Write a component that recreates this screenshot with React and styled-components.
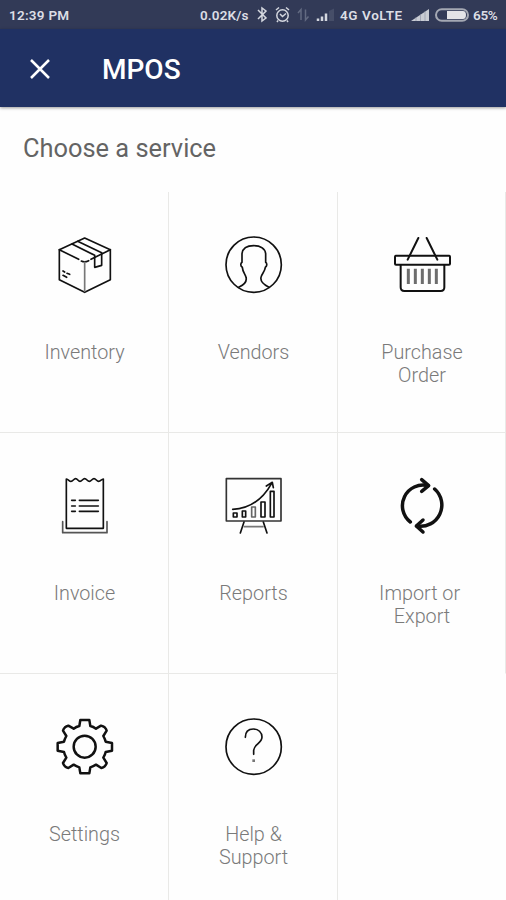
import React from "react";
import styled, { createGlobalStyle } from "styled-components";

const GlobalStyle = createGlobalStyle`
  * { box-sizing: border-box; }
  body { margin: 0; background: #fefefe; font-family: Roboto, "Liberation Sans", sans-serif; }
`;

const Screen = styled.main`
  width: 506px;
  height: 900px;
  overflow: hidden;
  display: flex;
  flex-direction: column;
  background: #fefefe;
`;

const StatusBar = styled.div`
  height: 29px;
  flex: none;
  display: flex;
  justify-content: space-between;
  align-items: center;
  padding: 1px 8px 0 9px;
  background: #323a57;
  color: #dcdee5;
  font-size: 13.5px;
  font-weight: 600;
  line-height: 16px;
`;

const StatusGroup = styled.div`
  display: flex;
  align-items: center;
`;

const StatusText = styled.span`
  width: ${(p) => (p.$width ? `${p.$width}px` : "auto")};
  margin-right: ${(p) => p.$gap || 0}px;
  letter-spacing: ${(p) => p.$spacing || 0}px;
  white-space: nowrap;
`;

const StatusIcon = styled.svg`
  display: block;
  flex: none;
  height: 20px;
  fill: none;
  stroke: #d4d7df;
  stroke-width: 1.5;
`;

const AppBar = styled.header`
  height: 78px;
  flex: none;
  display: flex;
  align-items: center;
  padding: 3px 0 0 29px;
  background: #203163;
  box-shadow: 0 1px 3px rgba(0, 0, 0, 0.4);
  color: #fff;
`;

const CloseButton = styled.button`
  width: 22px;
  height: 22px;
  padding: 0;
  border: 0;
  background: none;
  color: inherit;
  svg { display: block; }
`;

const Title = styled.h1`
  margin: 0 0 0 51px;
  font-size: 28px;
  font-weight: 500;
  line-height: 32px;
`;

const Heading = styled.h2`
  height: 85px;
  flex: none;
  margin: 0;
  padding: 25px 0 0 23px;
  color: #646464;
  font-size: 25.4px;
  font-weight: 400;
  line-height: 32px;
`;

const Grid = styled.section`
  display: grid;
  grid-template-columns: 169px 169px 168px;
  grid-auto-rows: 241px;
`;

const Tile = styled.div`
  display: flex;
  flex-direction: column;
  align-items: center;
  padding-top: 33px;
  border-right: 1px solid #e9e9e7;
  border-bottom: 1px solid ${(p) => (p.$open ? "transparent" : "#e9e9e7")};
`;

const TileIcon = styled.svg`
  display: block;
  width: 90px;
  height: 80px;
  fill: none;
  stroke: #111;
  stroke-width: ${(p) => p.$weight || 5};
  stroke-linecap: round;
  stroke-linejoin: round;
`;

const Label = styled.span`
  margin-top: 36px;
  padding-left: 1px;
  color: #7a7a7a;
  font-size: 19.8px;
  font-weight: 300;
  line-height: 23px;
  text-align: center;
  white-space: pre;
`;

const BoxIcon = () => (
  <TileIcon viewBox="-3 0 270 240">
    <path d="M134 39 L211 74 V164 L134 202 L58 164 V74 Z" />
    <path d="M58 74 L116 103 M153 103 L211 74 M96 57 L164 91 M113 49 L185 83" />
    <path d="M124 108 Q134 113 146 107" />
    <path d="M134 112 V199" stroke="#777" />
    <path d="M164 93 V127 L185 121 V86" />
    <path d="M69 138 L74 141 M81 145 L89 148 M69 151 L80 157" />
  </TileIcon>
);

const PersonIcon = () => (
  <TileIcon viewBox="-6 0 270 240">
    <circle cx="131" cy="119" r="83" />
    <path d="M86 187 C101 180 112 171 108 157 C106 147 98 141 97 127 C91 124 91 115 96 112 V86 C98 70 111 62 131 62 C151 62 165 71 167 86 V112 C172 115 171 124 166 127 C164 141 156 145 153 157 C150 171 161 179 177 187" />
  </TileIcon>
);

const BasketIcon = () => (
  <TileIcon viewBox="-3 0 270 240" $weight={6}>
    <rect x="51" y="92" width="165" height="27" rx="3" />
    <path d="M68 120 V187 Q68 198 79 198 H188 Q199 198 199 187 V120" />
    <path d="M121 39 L89 104 M146 39 L178 104" />
    <path
      d="M91 131 V177 M112 131 V177 M133 131 V177 M154 131 V177 M175 131 V177"
      stroke="#6d6d6d"
      strokeWidth="9"
      strokeLinecap="butt"
    />
  </TileIcon>
);

const InvoiceIcon = () => (
  <TileIcon viewBox="-3 3 270 240">
    <path d="M79 190 V42 C86 43 87 49 93 49 C99 49 101 41 107 41 C113 41 114 49 120 49 C126 49 128 41 134 41 C140 41 142 49 148 49 C154 49 156 41 162 41 C168 41 170 49 176 49 C182 49 184 43 190 42 V190 Z" />
    <path d="M68 170 V203 H201 V170" stroke="#555" />
    <path d="M95 106 H106 M118 106 H175 M95 123 H106 M118 123 H175 M95 139 H106 M118 139 H175" />
  </TileIcon>
);

const ChartIcon = () => (
  <TileIcon viewBox="-6 3 270 240">
    <rect x="49" y="41" width="164" height="127" stroke="#333" />
    <path d="M102 171 L91 204 M160 171 L171 204" />
    <path d="M103 185 H159" stroke="#777" />
    <path d="M68 133 C119 131 157 105 185 55 M169 63 L187 52 L190 68" />
    <path d="M70 144 H81 V156 H70 Z M97 138 H107 V156 H97 Z M153 111 H165 V156 H153 Z M181 79 H192 V156 H181 Z" />
    <path d="M125 126 H136 V156 H125 Z" stroke="#666" />
  </TileIcon>
);

const SyncIcon = () => (
  <TileIcon viewBox="-3 3 270 240" $weight={10.5}>
    <path d="M97 171 A62 62 0 0 1 150 62" />
    <path d="M131 44 L152 62 L131 79" />
    <path d="M170 72 A64 64 0 0 1 117 183" />
    <path d="M135 165 L115 183 L135 201" />
  </TileIcon>
);

const GearIcon = () => (
  <TileIcon viewBox="-3 0 270 240" $weight={7.5}>
    <circle cx="134" cy="119" r="33" />
    <path d="M121 39 H148 L151 57 Q160 59 168 65 L183 56 Q190 58 194 61 Q199 66 200 71 L190 87 Q195 96 197 104 L216 108 V131 L197 135 Q195 144 190 152 L200 168 Q199 173 194 178 Q190 182 184 183 L168 173 Q160 178 151 181 L148 199 H121 L118 181 Q109 178 101 173 L85 183 Q79 182 75 178 Q70 173 69 168 L79 152 Q74 144 72 135 L53 131 V108 L72 104 Q74 96 79 87 L69 71 Q70 66 75 61 Q79 58 85 56 L101 65 Q109 59 118 57 Z" />
  </TileIcon>
);

const HelpIcon = () => (
  <TileIcon viewBox="-6 0 270 240">
    <circle cx="131" cy="119" r="83" />
    <path d="M106 91 C106 75 115 66 130 66 C145 66 156 76 156 90 C156 109 132 112 131 130 V142" />
    <path d="M131 157 V165" stroke="#777" strokeWidth="8" strokeLinecap="butt" />
  </TileIcon>
);

const services = [
  { label: "Inventory", icon: BoxIcon },
  { label: "Vendors", icon: PersonIcon },
  { label: "Purchase\nOrder", icon: BasketIcon },
  { label: "Invoice", icon: InvoiceIcon },
  { label: "Reports", icon: ChartIcon },
  { label: "Import or\u00a0\nExport", icon: SyncIcon, open: true },
  { label: "Settings", icon: GearIcon },
  { label: "Help &\nSupport", icon: HelpIcon },
];

const StatusIcons = () => (
  <StatusGroup>
    <StatusText $width={50} $gap={5} $spacing={0.15}>0.02K/s</StatusText>
    <StatusIcon width="85" viewBox="255 5 85 20">
      <path d="M258 10 L266 18 L262 21 V8 L266 11 L258 19" />
      <circle cx="282.5" cy="15.5" r="5.7" />
      <path d="M276 10 L279 7.5 M289 10 L286 7.5 M280 14 L282.5 16.5 L286 13.5 M278 20.5 L277 22 M287 20.5 L288 22" />
      <path d="M301 20 V9.5 L298 13 M305.5 9.5 V20 L308.5 16.5" stroke="#626a81" />
      <path d="M318 21 V18.5 M322 21 V16.5 M326 21 V13.5" strokeWidth="2.5" />
      <path d="M329 21 V11 L334 8.5 V21 Z" fill="#464e68" stroke="none" />
    </StatusIcon>
    <StatusText $width={65} $gap={4} $spacing={0.6}>4G VoLTE</StatusText>
    <StatusIcon width="64" viewBox="409 5 64 20">
      <path d="M411 21 L429 9 V21 Z" fill="#c9ccd4" stroke="none" />
      <path d="M416 17 V21 M420.5 14 V21 M425 11 V21" stroke="#878d9f" strokeWidth="0.6" />
      <rect x="436" y="9.2" width="32" height="11.6" rx="5.8" stroke="#a4a8b3" strokeWidth="2" />
      <path d="M447 11 H463 Q466 11 466 15 Q466 19 463 19 H447 Z" fill="#e3e3e7" stroke="none" />
    </StatusIcon>
    <StatusText $width={25} $spacing={-0.3}>65%</StatusText>
  </StatusGroup>
);

export default function App() {
  return (
    <>
      <GlobalStyle />
      <Screen>
        <StatusBar>
          <StatusText $spacing={0.25}>12:39 PM</StatusText>
          <StatusIcons />
        </StatusBar>
        <AppBar>
          <CloseButton aria-label="Close">
            <svg width="22" height="22" fill="none" stroke="currentColor" strokeWidth="2.5">
              <path d="M2 1 L20 19 M20 1 L2 19" />
            </svg>
          </CloseButton>
          <Title>MPOS</Title>
        </AppBar>
        <Heading>Choose a service</Heading>
        <Grid>
          {services.map(({ label, icon: Icon, open }) => (
            <Tile key={label} $open={open}>
              <Icon />
              <Label>{label}</Label>
            </Tile>
          ))}
        </Grid>
      </Screen>
    </>
  );
}
